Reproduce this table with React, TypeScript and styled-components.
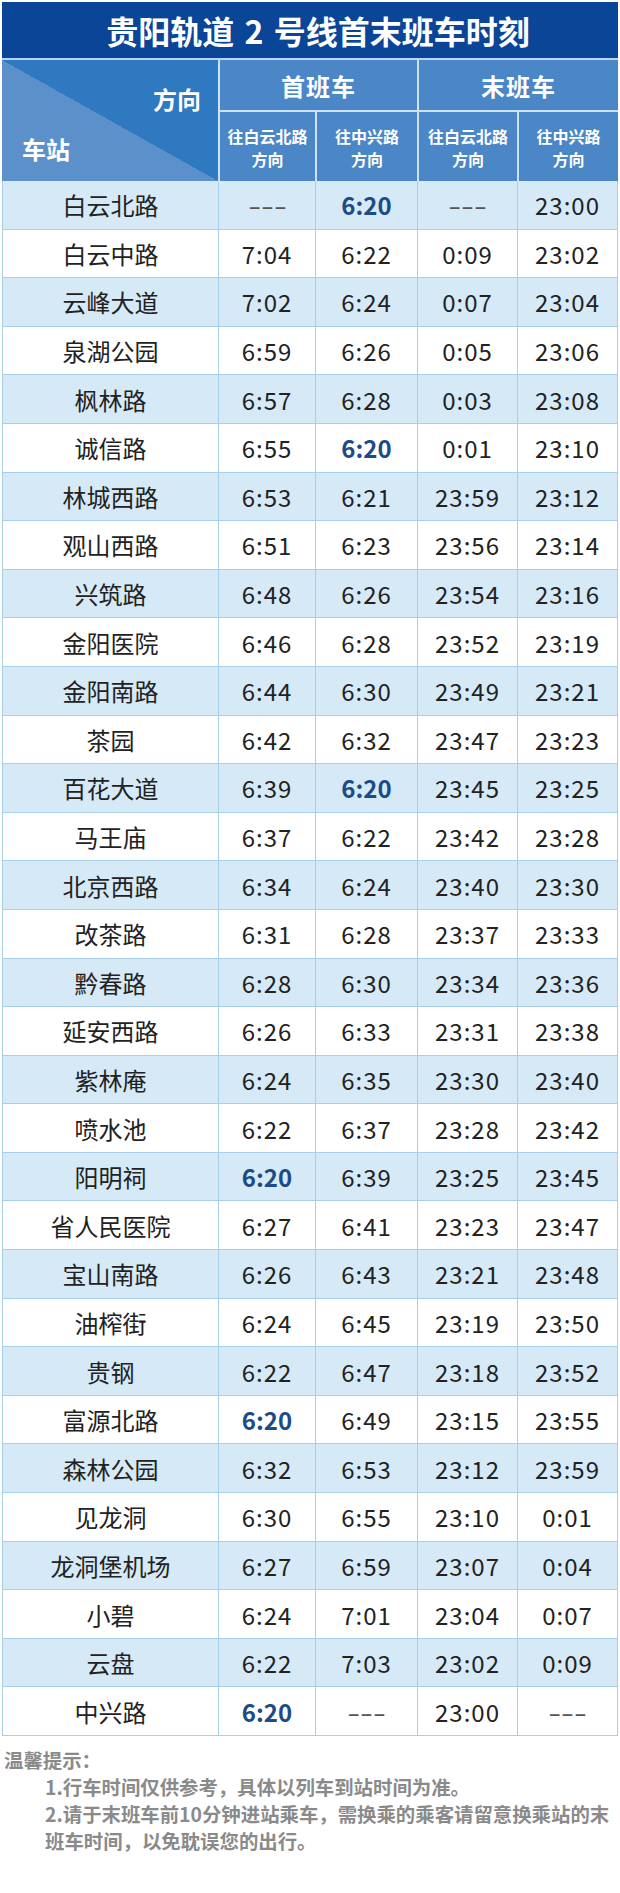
import React from "react"
import styled, { createGlobalStyle } from "styled-components"

const GlobalStyle = createGlobalStyle`
  body {
    margin: 0;
    background: #fff;
    font-family: "Noto Sans CJK SC", "Noto Sans", sans-serif;
  }
`

type Cell = string | { t: string; b: true }

const B = (t: string): Cell => ({ t, b: true })

const rows: [string, Cell, Cell, Cell, Cell][] = [
  ["白云北路", "---", B("6:20"), "---", "23:00"],
  ["白云中路", "7:04", "6:22", "0:09", "23:02"],
  ["云峰大道", "7:02", "6:24", "0:07", "23:04"],
  ["泉湖公园", "6:59", "6:26", "0:05", "23:06"],
  ["枫林路", "6:57", "6:28", "0:03", "23:08"],
  ["诚信路", "6:55", B("6:20"), "0:01", "23:10"],
  ["林城西路", "6:53", "6:21", "23:59", "23:12"],
  ["观山西路", "6:51", "6:23", "23:56", "23:14"],
  ["兴筑路", "6:48", "6:26", "23:54", "23:16"],
  ["金阳医院", "6:46", "6:28", "23:52", "23:19"],
  ["金阳南路", "6:44", "6:30", "23:49", "23:21"],
  ["茶园", "6:42", "6:32", "23:47", "23:23"],
  ["百花大道", "6:39", B("6:20"), "23:45", "23:25"],
  ["马王庙", "6:37", "6:22", "23:42", "23:28"],
  ["北京西路", "6:34", "6:24", "23:40", "23:30"],
  ["改茶路", "6:31", "6:28", "23:37", "23:33"],
  ["黔春路", "6:28", "6:30", "23:34", "23:36"],
  ["延安西路", "6:26", "6:33", "23:31", "23:38"],
  ["紫林庵", "6:24", "6:35", "23:30", "23:40"],
  ["喷水池", "6:22", "6:37", "23:28", "23:42"],
  ["阳明祠", B("6:20"), "6:39", "23:25", "23:45"],
  ["省人民医院", "6:27", "6:41", "23:23", "23:47"],
  ["宝山南路", "6:26", "6:43", "23:21", "23:48"],
  ["油榨街", "6:24", "6:45", "23:19", "23:50"],
  ["贵钢", "6:22", "6:47", "23:18", "23:52"],
  ["富源北路", B("6:20"), "6:49", "23:15", "23:55"],
  ["森林公园", "6:32", "6:53", "23:12", "23:59"],
  ["见龙洞", "6:30", "6:55", "23:10", "0:01"],
  ["龙洞堡机场", "6:27", "6:59", "23:07", "0:04"],
  ["小碧", "6:24", "7:01", "23:04", "0:07"],
  ["云盘", "6:22", "7:03", "23:02", "0:09"],
  ["中兴路", B("6:20"), "---", "23:00", "---"],
]

const Page = styled.div`
  width: 620px;
  padding: 2px;
  box-sizing: border-box;
`

const Title = styled.div`
  height: 56px;
  background: #0b4597;
  color: #fff;
  font-size: 32px;
  font-weight: 700;
  display: flex;
  align-items: center;
  justify-content: center;
  padding-left: 16px;
  box-sizing: border-box;
  word-spacing: 3px;
`

const Header = styled.div`
  display: grid;
  grid-template-columns: 216px 95px 100px 98px 99px;
  grid-template-rows: 50px 69px;
  gap: 2px;
  background: #cfe2f4;
  border-top: 2px solid #b6d6ef;
  color: #fff;
  font-weight: 700;
`

const StationHead = styled.div`
  grid-row: 1 / 3;
  background: linear-gradient(to top right, #5b90cb 50%, #2f79c0 50%);
  display: flex;
  flex-direction: column;
  justify-content: space-between;
  padding: 27px 17px 20px 20px;
  font-size: 24px;
  line-height: 24px;
`

const Corner = styled.span<{ $end?: boolean }>`
  align-self: ${(p) => (p.$end ? "flex-end" : "flex-start")};
`

const GroupHead = styled.div`
  grid-column: span 2;
  background: #4b86c7;
  font-size: 24px;
  display: flex;
  align-items: center;
  justify-content: center;
  letter-spacing: 1px;
`

const SubHead = styled.div`
  background: #4b86c7;
  font-size: 16px;
  line-height: 23px;
  display: flex;
  flex-direction: column;
  align-items: center;
  justify-content: center;
  text-align: center;
  padding-top: 2px;
`

const Body = styled.div`
  display: flex;
  flex-direction: column;
  gap: 1px;
  background: #a7cfea;
  padding: 0 1px 1px 1px;
`

const Row = styled.div`
  display: grid;
  grid-template-columns: 215px 96px 101px 99px 99px;
  gap: 1px;
  height: 47.6px;
`

const Td = styled.div<{ $alt: boolean }>`
  background: ${(p) => (p.$alt ? "#d6e9f7" : "#ffffff")};
  display: flex;
  align-items: center;
  justify-content: center;
  color: #222;
  font-size: 24px;
`

const Time = styled.span<{ $bold?: boolean }>`
  font-size: 24px;
  letter-spacing: ${(p) => (p.$bold ? "0" : "1px")};
  font-weight: ${(p) => (p.$bold ? 700 : 400)};
  color: ${(p) => (p.$bold ? "#1c4c85" : "#222")};
`

const Dash = styled.span`
  display: inline-block;
  font-size: 24px;
  color: #555;
  letter-spacing: 0;
  transform: scaleX(1.55);
`

const Notes = styled.div`
  padding: 10px 0 0 2px;
  color: #8a8a8a;
  font-weight: 700;
  font-size: 19.4px;
  line-height: 27px;
  white-space: nowrap;
`

const NoteLine = styled.div`
  padding-left: 41px;
`

const renderCell = (c: Cell) => {
  if (typeof c === "string") {
    return c === "---" ? <Dash>{c}</Dash> : <Time>{c}</Time>
  }
  return <Time $bold>{c.t}</Time>
}

const App: React.FC = () => {
  return (
    <>
      <GlobalStyle />
      <Page>
        <Title>贵阳轨道 2 号线首末班车时刻</Title>
        <Header>
          <StationHead>
            <Corner $end>方向</Corner>
            <Corner>车站</Corner>
          </StationHead>
          <GroupHead>首班车</GroupHead>
          <GroupHead>末班车</GroupHead>
          <SubHead><span>往白云北路</span><span>方向</span></SubHead>
          <SubHead><span>往中兴路</span><span>方向</span></SubHead>
          <SubHead><span>往白云北路</span><span>方向</span></SubHead>
          <SubHead><span>往中兴路</span><span>方向</span></SubHead>
        </Header>
        <Body>
          {rows.map(([name, a, b, c, d], i) => (
            <Row key={name}>
              <Td $alt={i % 2 === 0}>{name}</Td>
              <Td $alt={i % 2 === 0}>{renderCell(a)}</Td>
              <Td $alt={i % 2 === 0}>{renderCell(b)}</Td>
              <Td $alt={i % 2 === 0}>{renderCell(c)}</Td>
              <Td $alt={i % 2 === 0}>{renderCell(d)}</Td>
            </Row>
          ))}
        </Body>
        <Notes>
          <div>温馨提示：</div>
          <NoteLine>1.行车时间仅供参考，具体以列车到站时间为准。</NoteLine>
          <NoteLine>2.请于末班车前10分钟进站乘车，需换乘的乘客请留意换乘站的末</NoteLine>
          <NoteLine>班车时间，以免耽误您的出行。</NoteLine>
        </Notes>
      </Page>
    </>
  )
}

export default App
